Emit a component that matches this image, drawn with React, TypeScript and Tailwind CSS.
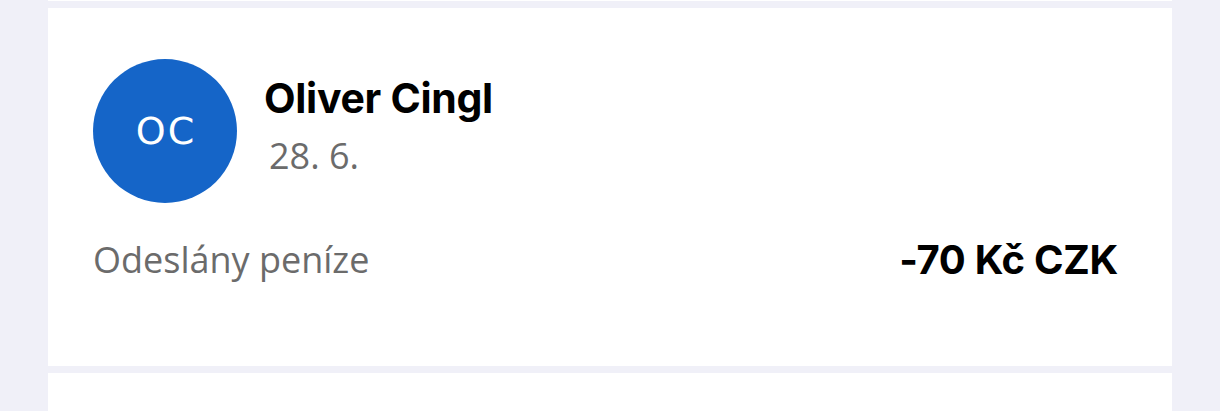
import React from "react";

export default function App() {
  return (
    <div className="w-[1220px] h-[411px] overflow-hidden bg-[#f0f0f8] px-[48px] flex flex-col gap-[7px]" style={{ fontFamily: "'Open Sans', Roboto, sans-serif" }}>
      <div className="h-[1px] bg-white shrink-0" />
      <div className="bg-white h-[358px] shrink-0 pl-[45px] pr-[54px] pt-[51px] flex flex-col">
        <div className="flex items-start">
          <div className="w-[144px] h-[144px] rounded-full bg-[#1565c8] flex items-center justify-center text-white text-[38px] shrink-0" style={{ fontFamily: "'DejaVu Sans', sans-serif" }}>
            <span className="tracking-[2px] pl-[2px] leading-none">OC</span>
          </div>
          <div className="ml-[27px] flex flex-col">
            <div className="text-[41px] font-bold text-black leading-none mt-[19px] tracking-[-0.3px]" style={{ fontFamily: "Inter, sans-serif" }}>
              Oliver Cingl
            </div>
            <div className="text-[36px] text-[#6b6b6b] leading-none mt-[19px] ml-[5px]">28. 6.</div>
          </div>
        </div>
        <div className="flex items-center justify-between mt-[37px]">
          <div className="text-[36px] text-[#6b6b6b] leading-none">Odeslány peníze</div>
          <div className="text-[40px] font-bold text-black leading-none tracking-[-0.3px]" style={{ fontFamily: "Inter, sans-serif" }}>
            -70 Kč CZK
          </div>
        </div>
      </div>
      <div className="bg-white h-[60px] shrink-0" />
    </div>
  );
}
